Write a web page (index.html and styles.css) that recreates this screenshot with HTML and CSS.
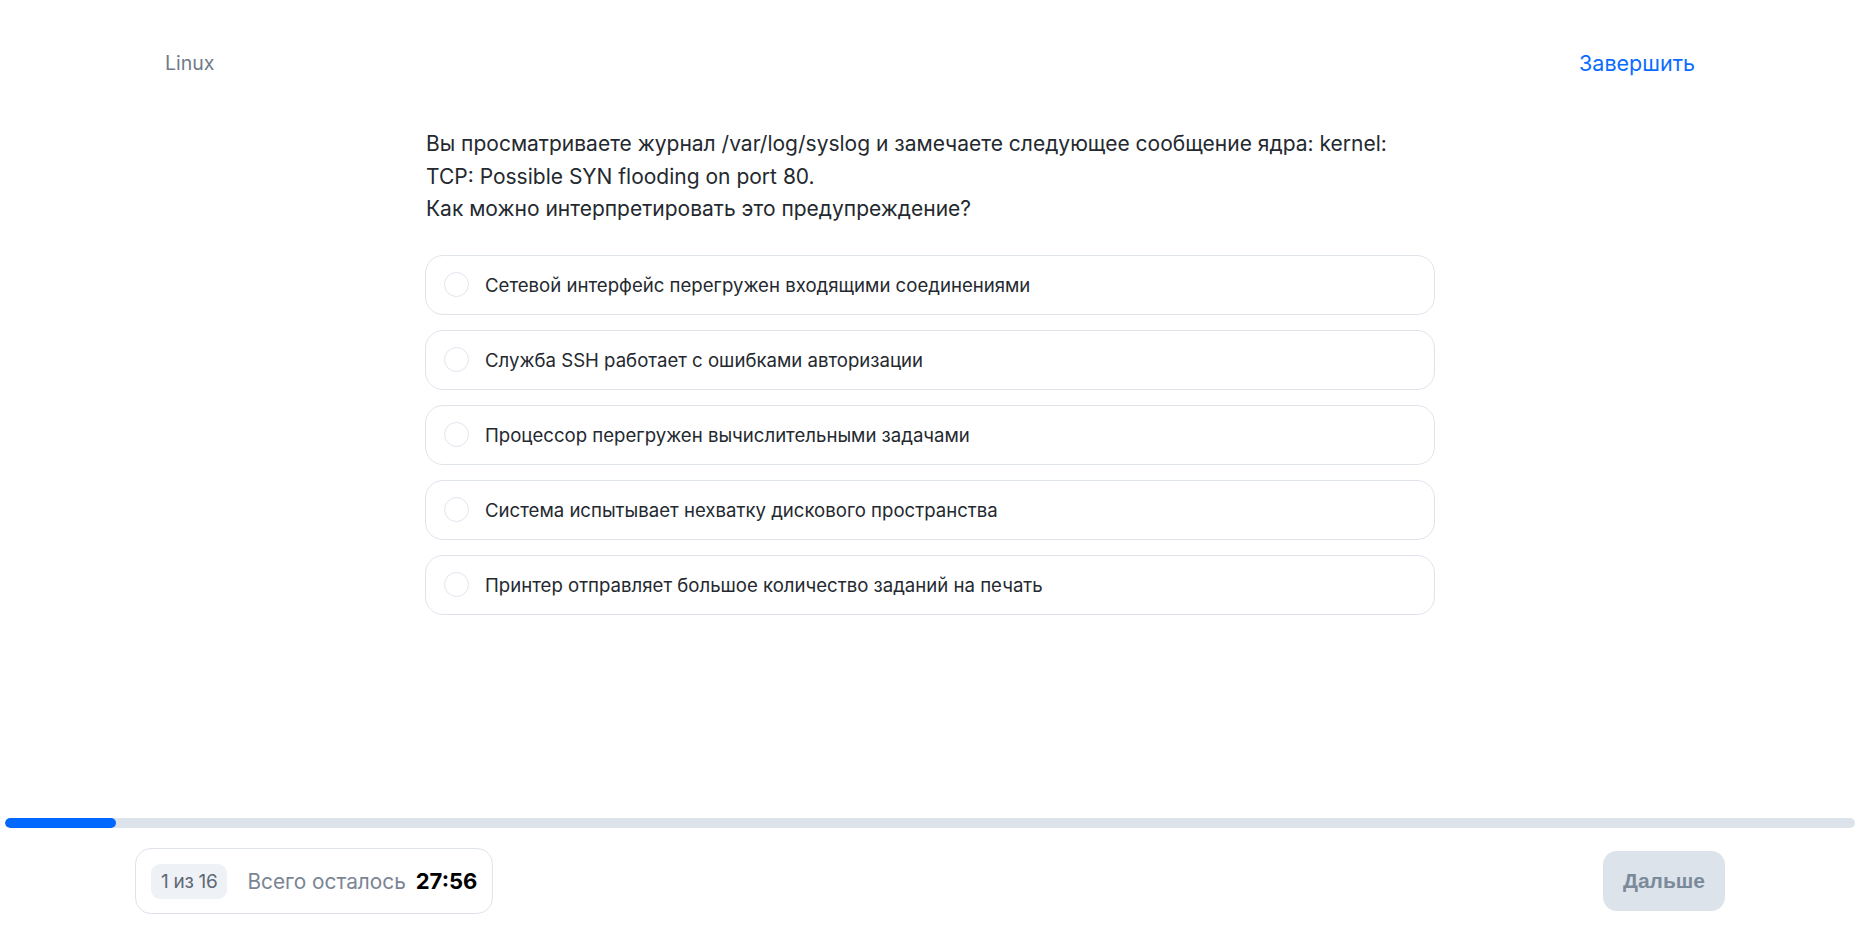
FILE: index.html
```html
<!DOCTYPE html>
<html lang="ru">
<head>
<meta charset="utf-8">
<title>Linux</title>
<link rel="stylesheet" href="styles.css">
</head>
<body>
<div class="page">
  <header class="header">
    <span class="topic">Linux</span>
    <a class="finish" href="#">Завершить</a>
  </header>
  <main class="main">
    <div class="question">
      <p>Вы просматриваете журнал /var/log/syslog и замечаете следующее сообщение ядра: kernel: TCP: Possible SYN flooding on port 80.</p>
      <p>Как можно интерпретировать это предупреждение?</p>
    </div>
    <div class="options">
      <label class="option"><span class="radio"></span><span class="option-text">Сетевой интерфейс перегружен входящими соединениями</span></label>
      <label class="option"><span class="radio"></span><span class="option-text">Служба SSH работает с ошибками авторизации</span></label>
      <label class="option"><span class="radio"></span><span class="option-text">Процессор перегружен вычислительными задачами</span></label>
      <label class="option"><span class="radio"></span><span class="option-text">Система испытывает нехватку дискового пространства</span></label>
      <label class="option"><span class="radio"></span><span class="option-text">Принтер отправляет большое количество заданий на печать</span></label>
    </div>
  </main>
  <footer class="footer">
    <div class="progress"><div class="progress-fill" style="width: 6%"></div></div>
    <div class="bottom">
      <div class="status">
        <span class="counter">1 из 16</span>
        <span class="remain">Всего осталось</span>
        <span class="timer">27:56</span>
      </div>
      <button class="next">Дальше</button>
    </div>
  </footer>
</div>
</body>
</html>
```

FILE: styles.css
```css
* { box-sizing: border-box; }
html, body { margin: 0; padding: 0; background: #fff; }
body {
  font-family: Inter, "Noto Sans", "Liberation Sans", sans-serif;
  color: #1f2328;
}
.page {
  height: 935px;
  display: flex;
  flex-direction: column;
}
.header {
  display: flex;
  justify-content: space-between;
  align-items: center;
  padding: 49px 165px 0;
  height: 77px;
  line-height: 28px;
}
.topic {
  font-size: 19.5px;
  color: #6f7b8a;
}
.finish {
  font-size: 21.5px;
  color: #0a6cff;
  text-decoration: none;
}
.main {
  flex: 1;
  width: 1010px;
  margin: 0 auto;
  padding-top: 51px;
}
.question {
  font-size: 21px;
  line-height: 32.5px;
  color: #24292f;
  padding-left: 1px;
  padding-right: 20px;
}
.question p { margin: 0; }
.options {
  margin-top: 29px;
  display: flex;
  flex-direction: column;
  gap: 15px;
}
.option {
  display: flex;
  align-items: center;
  gap: 16px;
  height: 60px;
  padding: 0 18px;
  border: 1px solid #dfe4eb;
  border-radius: 18px;
  font-size: 18.6px;
  color: #24292f;
  cursor: pointer;
}
.radio {
  width: 25px;
  height: 25px;
  border: 1.5px solid #e1e6ed;
  border-radius: 50%;
  flex: none;
}
.footer {
  height: 117px;
}
.progress {
  height: 10px;
  margin: 0 5px;
  background: #dde3ea;
  border-radius: 5px;
  overflow: hidden;
}
.progress-fill {
  height: 100%;
  background: #0068ff;
  border-radius: 5px;
}
.bottom {
  display: flex;
  justify-content: space-between;
  align-items: center;
  padding: 20px 135px 0;
}
.status {
  display: flex;
  align-items: center;
  height: 66px;
  padding: 0 15px 0 15px;
  border: 1px solid #dfe4eb;
  border-radius: 16px;
}
.counter {
  background: #eef2f7;
  border-radius: 9px;
  height: 35px;
  padding: 0 10px;
  display: flex;
  align-items: center;
  font-size: 19px;
  color: #5f6874;
  letter-spacing: -0.3px;
}
.remain {
  margin-left: 20px;
  font-size: 20.8px;
  color: #7a8594;
}
.timer {
  margin-left: 10px;
  font-size: 22px;
  font-weight: 700;
  color: #000;
}
.next {
  width: 122px;
  height: 60px;
  border: none;
  border-radius: 14px;
  background: #dce3eb;
  color: #7b8a9a;
  font-family: "Liberation Sans", Arial, sans-serif;
  font-weight: 700;
  font-size: 21px;
}
```
